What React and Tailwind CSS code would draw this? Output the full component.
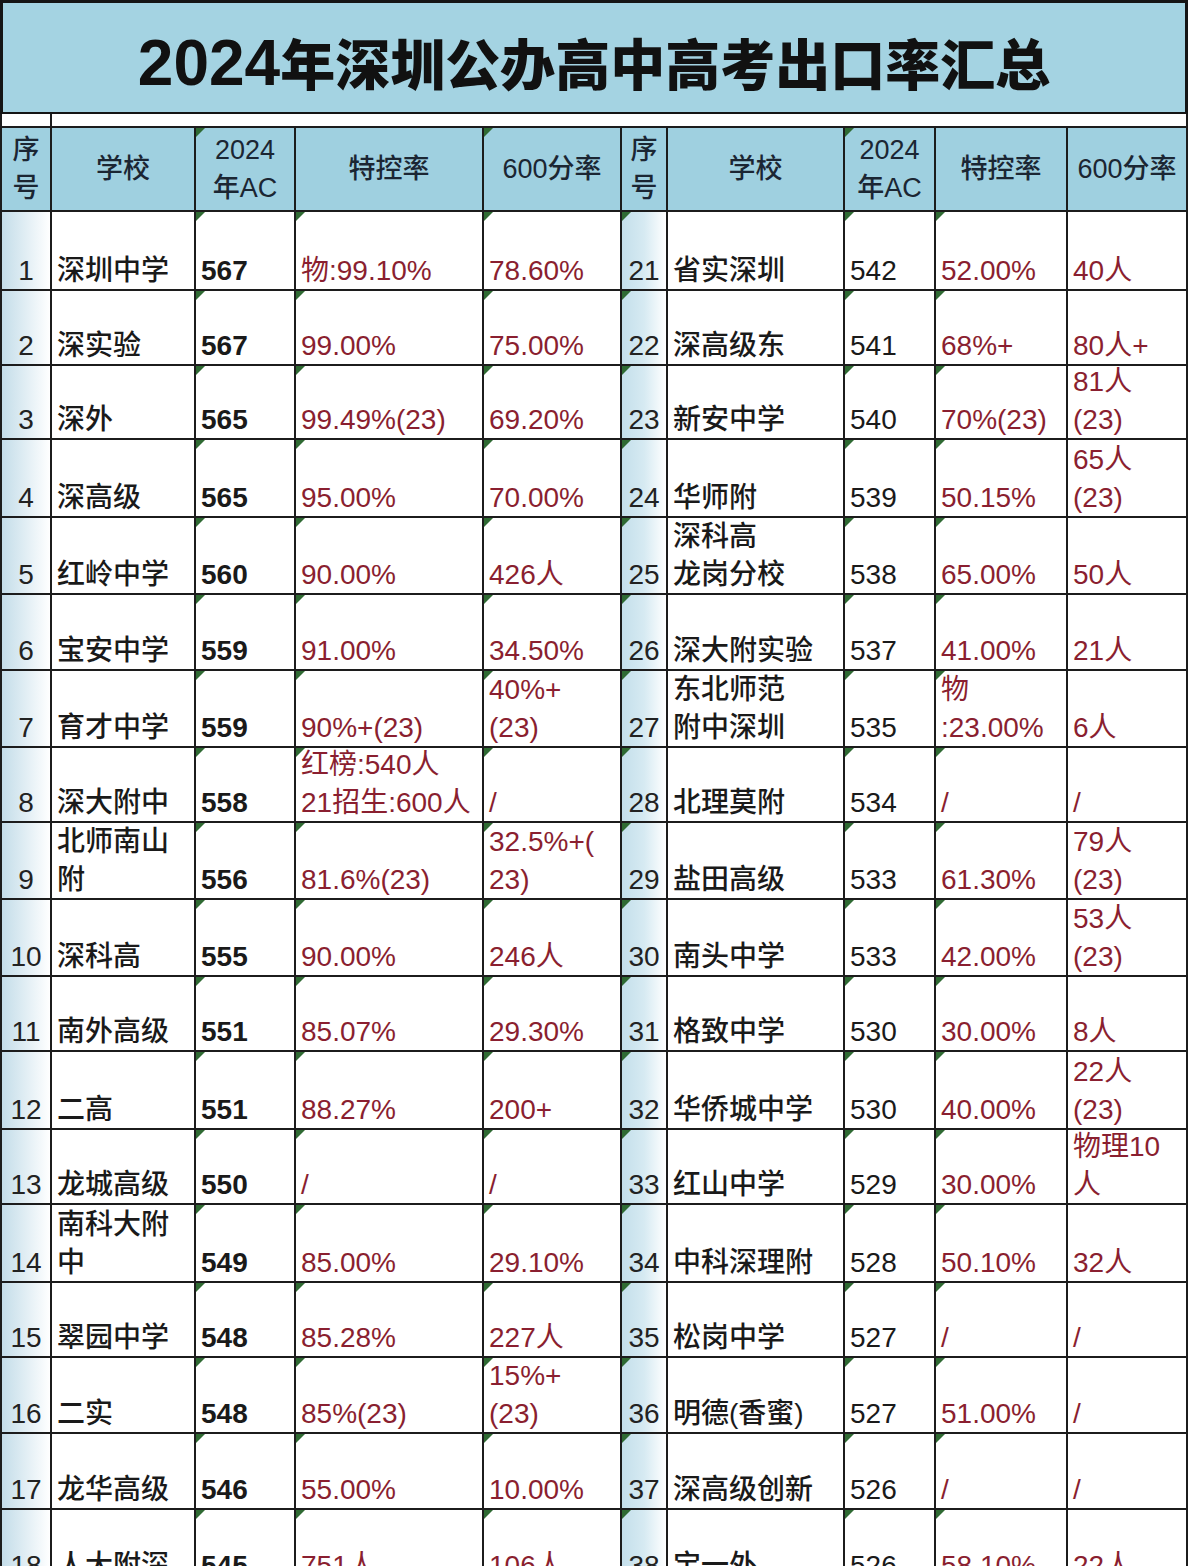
import React from 'react';

const cols = 'grid grid-cols-[52px_144px_100px_188px_138px_46px_177px_91px_132px_120px]';
const font = 'font-["Liberation_Sans","Noto_Sans_CJK_SC",sans-serif]';

const rows = [
  { h: 'h-[79px]', l: ['1', '深圳中学', '567', '物:99.10%', '78.60%'], r: ['21', '省实深圳', '542', '52.00%', '40人'] },
  { h: 'h-[75px]', l: ['2', '深实验', '567', '99.00%', '75.00%'], r: ['22', '深高级东', '541', '68%+', '80人+'] },
  { h: 'h-[74px]', l: ['3', '深外', '565', '99.49%(23)', '69.20%'], r: ['23', '新安中学', '540', '70%(23)', '81人\n(23)'] },
  { h: 'h-[78px]', l: ['4', '深高级', '565', '95.00%', '70.00%'], r: ['24', '华师附', '539', '50.15%', '65人\n(23)'] },
  { h: 'h-[77px]', l: ['5', '红岭中学', '560', '90.00%', '426人'], r: ['25', '深科高\n龙岗分校', '538', '65.00%', '50人'] },
  { h: 'h-[76px]', l: ['6', '宝安中学', '559', '91.00%', '34.50%'], r: ['26', '深大附实验', '537', '41.00%', '21人'] },
  { h: 'h-[77px]', l: ['7', '育才中学', '559', '90%+(23)', '40%+\n(23)'], r: ['27', '东北师范\n附中深圳', '535', '物\n:23.00%', '6人'] },
  { h: 'h-[75px]', l: ['8', '深大附中', '558', '红榜:540人\n21招生:600人', '/'], r: ['28', '北理莫附', '534', '/', '/'] },
  { h: 'h-[77px]', l: ['9', '北师南山\n附', '556', '81.6%(23)', '32.5%+(\n23)'], r: ['29', '盐田高级', '533', '61.30%', '79人\n(23)'] },
  { h: 'h-[77px]', l: ['10', '深科高', '555', '90.00%', '246人'], r: ['30', '南头中学', '533', '42.00%', '53人\n(23)'] },
  { h: 'h-[75px]', l: ['11', '南外高级', '551', '85.07%', '29.30%'], r: ['31', '格致中学', '530', '30.00%', '8人'] },
  { h: 'h-[78px]', l: ['12', '二高', '551', '88.27%', '200+'], r: ['32', '华侨城中学', '530', '40.00%', '22人\n(23)'] },
  { h: 'h-[75px]', l: ['13', '龙城高级', '550', '/', '/'], r: ['33', '红山中学', '529', '30.00%', '物理10\n人'] },
  { h: 'h-[78px]', l: ['14', '南科大附\n中', '549', '85.00%', '29.10%'], r: ['34', '中科深理附', '528', '50.10%', '32人'] },
  { h: 'h-[75px]', l: ['15', '翠园中学', '548', '85.28%', '227人'], r: ['35', '松岗中学', '527', '/', '/'] },
  { h: 'h-[76px]', l: ['16', '二实', '548', '85%(23)', '15%+\n(23)'], r: ['36', '明德(香蜜)', '527', '51.00%', '/'] },
  { h: 'h-[76px]', l: ['17', '龙华高级', '546', '55.00%', '10.00%'], r: ['37', '深高级创新', '526', '/', '/'] },
  { h: 'h-[76px]', l: ['18', '人大附深', '545', '751人', '106人'], r: ['38', '宝一外', '526', '58.10%', '22人'] },
];

function Tri() {
  return <span className="absolute left-0 top-0 w-0 h-0 border-t-[9px] border-r-[9px] border-t-[#2f6a33] border-r-transparent" />;
}

function Cell({ children, tri, className = '', inner = '' }) {
  return (
    <div className={`relative flex items-end overflow-hidden border-r-2 border-b-2 border-[#1c1c1c] ${className}`}>
      {tri && <Tri />}
      <div className={`whitespace-pre-line leading-[38px] mb-[-1px] ${inner}`}>{children}</div>
    </div>
  );
}

function HeadCell({ children, tri, className = '' }) {
  return (
    <div className={`relative flex items-center justify-center border-r-2 border-b-2 border-[#1c1c1c] bg-[#9fd0e0] text-center ${className}`}>
      {tri && <Tri />}
      <div className="whitespace-pre-line leading-[38px] text-[27px] font-medium text-[#1b2633]">{children}</div>
    </div>
  );
}

function Half({ d, side }) {
  const seq = side === 'l'
    ? 'justify-center border-l-2 bg-gradient-to-r from-[#c4dde9] to-white'
    : 'justify-center bg-gradient-to-r from-[#c4dfeb] via-[#d6eaf2] to-white';
  return (
    <>
      <Cell className={seq} tri={side === 'r'} inner="text-[#222] text-center">{d[0]}</Cell>
      <Cell inner="pl-[5px] text-[#1a1a1a] font-medium">{d[1]}</Cell>
      <Cell tri inner={`pl-[5px] text-[#1a1a1a] ${side === 'l' ? 'font-bold' : 'font-normal'}`}>{d[2]}</Cell>
      <Cell tri inner="pl-[5px] text-[#8a1f30]">{d[3]}</Cell>
      <Cell tri={side === 'l'} inner="pl-[5px] text-[#8a1f30]">{d[4]}</Cell>
    </>
  );
}

export default function App() {
  return (
    <div className={`w-[1188px] h-[1566px] overflow-hidden bg-white text-[28px] ${font}`}>
      <div className="h-[114px] border-t-[3px] border-l-[3px] border-r-[3px] border-b-2 border-[#151515] bg-[#a4d3e2] flex items-center justify-center pt-[10px]">
        <h1 className="text-[55px] font-black text-[#111] leading-none">
          <span className="text-[64px]">2024</span>年深圳公办高中高考出口率汇总
        </h1>
      </div>

      <div className="flex h-[14px] border-b-2 border-r-2 border-[#1c1c1c]">
        <div className="w-[52px] border-l-2 border-r-2 border-[#1c1c1c]" />
        <div className="flex-1" />
      </div>

      <div className={`${cols} h-[84px] border-r-2 border-[#1c1c1c]`}>
        <HeadCell className="border-l-2">{'序\n号'}</HeadCell>
        <HeadCell>学校</HeadCell>
        <HeadCell tri>{'2024\n年AC'}</HeadCell>
        <HeadCell>特控率</HeadCell>
        <HeadCell tri>600分率</HeadCell>
        <HeadCell>{'序\n号'}</HeadCell>
        <HeadCell>学校</HeadCell>
        <HeadCell tri>{'2024\n年AC'}</HeadCell>
        <HeadCell>特控率</HeadCell>
        <HeadCell className="border-r-0">600分率</HeadCell>
      </div>

      {rows.map((row) => (
        <div key={row.l[0]} className={`${cols} ${row.h}`}>
          <Half d={row.l} side="l" />
          <Half d={row.r} side="r" />
        </div>
      ))}
    </div>
  );
}
